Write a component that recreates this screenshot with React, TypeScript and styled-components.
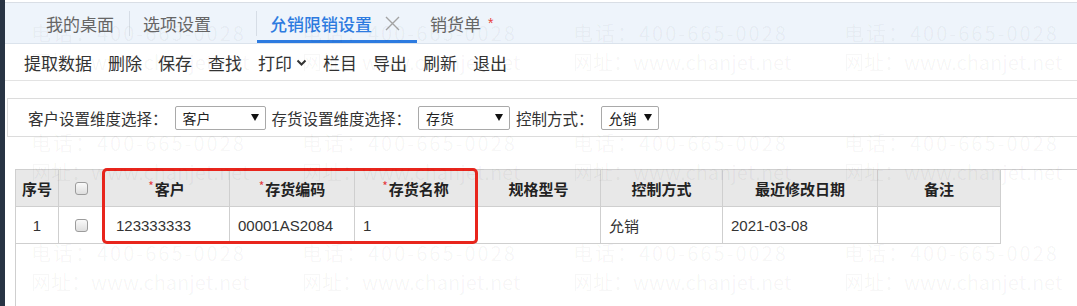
import React from 'react'
import styled, { createGlobalStyle } from 'styled-components'

const GlobalStyle = createGlobalStyle`
  html, body {
    margin: 0;
    padding: 0;
    background: #fff;
  }
  body {
    font-family: 'Liberation Sans', 'Noto Sans CJK SC', sans-serif;
    color: #333;
  }
  * {
    box-sizing: border-box;
  }
`

const Page = styled.div`
  position: relative;
  display: flex;
  width: 1077px;
  height: 306px;
  overflow: hidden;
  background: #fff;
`

const SideStrip = styled.div`
  width: 5px;
  flex-shrink: 0;
  background: #283444;
`

const Main = styled.div`
  flex: 1;
  display: flex;
  flex-direction: column;
  min-width: 0;
`

const TabBar = styled.div`
  margin-top: 2px;
  height: 42px;
  display: flex;
  align-items: stretch;
  padding-left: 28px;
  background: #eef4fb;
  border-top: 1px solid #d9dee5;
  border-bottom: 1px solid #dbe3ec;
`

const Tab = styled.div<{ $active?: boolean }>`
  display: flex;
  align-items: center;
  gap: 13px;
  padding: 0 15px 0 13px;
  font-family: 'Noto Sans CJK SC', sans-serif;
  font-size: 17px;
  font-weight: ${({ $active }) => ($active ? 500 : 400)};
  color: ${({ $active }) => ($active ? '#2d7be0' : '#666')};
  box-shadow: ${({ $active }) => ($active ? 'inset 0 -3px 0 #2d7be0' : 'none')};
`

const TabSep = styled.div`
  align-self: center;
  width: 1px;
  height: 25px;
  background: #d6dde6;
`

const CloseSlot = styled.span<{ $hidden?: boolean }>`
  display: flex;
  width: 17px;
  visibility: ${({ $hidden }) => ($hidden ? 'hidden' : 'visible')};
`

const DirtyMark = styled.span`
  align-self: flex-start;
  margin: 12px 0 0 -8px;
  font-size: 14px;
  color: #e8403a;
`

const Toolbar = styled.div`
  height: 37px;
  display: flex;
  align-items: center;
  gap: 16px;
  padding-left: 19px;
  border-bottom: 1px solid #e3e3e3;
  font-family: 'Noto Sans CJK SC', sans-serif;
  font-size: 17px;
  color: #333;
`

const ToolItem = styled.span`
  display: flex;
  align-items: center;
  gap: 4px;
`

const FilterPanel = styled.div`
  margin: 17px 0 0 2px;
  height: 39px;
  display: flex;
  align-items: center;
  padding-left: 20px;
  border: 1px solid #dcdcdc;
  border-right: none;
`

const FilterLabel = styled.span`
  font-family: 'Noto Sans CJK SC', sans-serif;
  font-size: 15.5px;
  color: #333;
  margin-right: 7px;
`

const SelectBox = styled.div<{ $width: number }>`
  width: ${({ $width }) => $width}px;
  height: 24px;
  display: flex;
  align-items: center;
  justify-content: space-between;
  padding: 0 6px 0 7px;
  margin-right: 6px;
  border: 1px solid #a9a9a9;
  border-radius: 2px;
  background: #fff;
  font-family: 'Noto Sans CJK SC', sans-serif;
  font-size: 14px;
  color: #222;
`

const GridArea = styled.div`
  position: relative;
  flex: 1;
  margin: 32px 0 0 10px;
  border-top: 1px solid #cfcfcf;
  border-left: 1px solid #cfcfcf;
`

const DataGrid = styled.div`
  display: grid;
  grid-template-columns: 43px 45px 126px 125px 122px 124px 122px 155px 123px;
  grid-auto-rows: 37px;
`

const HeadCell = styled.div`
  display: flex;
  align-items: center;
  justify-content: center;
  background: #e8e8e8;
  border-right: 1px solid #cfcfcf;
  border-bottom: 1px solid #cfcfcf;
  font-family: 'Noto Sans CJK SC', sans-serif;
  font-size: 15px;
  font-weight: 700;
  color: #222;
`

const Required = styled.span`
  align-self: flex-start;
  margin: 7px 1px 0 0;
  font-size: 12px;
  font-weight: 400;
  color: #e4393c;
`

const Cell = styled.div<{ $align?: 'left' | 'center'; $pad?: number }>`
  display: flex;
  align-items: center;
  justify-content: ${({ $align }) => ($align === 'center' ? 'center' : 'flex-start')};
  padding-left: ${({ $pad, $align }) => ($align === 'center' ? 0 : $pad ?? 8)}px;
  background: #fff;
  border-right: 1px solid #cfcfcf;
  border-bottom: 1px solid #cfcfcf;
  font-size: 15px;
  color: #333;
`

const CheckBox = styled.span`
  width: 13px;
  height: 13px;
  border: 1px solid #9c9c9c;
  border-radius: 3px;
  background: linear-gradient(#fafafa, #dedede);
`

const Highlight = styled.div`
  position: absolute;
  left: 86px;
  top: -2px;
  width: 376px;
  height: 76px;
  border: 3px solid #e8251c;
  border-radius: 5px;
  pointer-events: none;
`

const Watermark = styled.div`
  position: absolute;
  inset: 0;
  display: grid;
  grid-template-columns: repeat(4, 271px);
  grid-auto-rows: 110px;
  padding: 18px 0 0 31px;
  pointer-events: none;
  font-family: 'Noto Sans CJK SC', sans-serif;
  font-size: 20px;
  line-height: 29px;
  color: rgba(0, 0, 0, 0.045);
  white-space: nowrap;
`

const MarkLine = styled.div<{ $spaced?: boolean }>`
  letter-spacing: ${({ $spaced }) => ($spaced ? '2px' : '0')};
`

const CloseIcon = () => (
  <svg width="15" height="15" viewBox="0 0 15 15">
    <path d="M1 1 L14 14 M14 1 L1 14" stroke="#a3a3a3" strokeWidth="1.4" fill="none" />
  </svg>
)

const Chevron = () => (
  <svg width="11" height="7" viewBox="0 0 11 7">
    <polyline points="1.5,1.5 5.5,5.5 9.5,1.5" stroke="#333" strokeWidth="2" fill="none" />
  </svg>
)

const Caret = () => (
  <svg width="8" height="7" viewBox="0 0 8 7">
    <polygon points="0,0 8,0 4,7" fill="#111" />
  </svg>
)

const tools = ['提取数据', '删除', '保存', '查找', '打印', '栏目', '导出', '刷新', '退出']

const headers = [
  { label: '序号' },
  { label: '', check: true },
  { label: '客户', required: true },
  { label: '存货编码', required: true },
  { label: '存货名称', required: true },
  { label: '规格型号' },
  { label: '控制方式' },
  { label: '最近修改日期' },
  { label: '备注' },
]

const App: React.FC = () => {
  const marks = Array.from({ length: 12 })

  return (
    <Page>
      <GlobalStyle />
      <SideStrip />
      <Main>
        <TabBar>
          <Tab>我的桌面</Tab>
          <TabSep />
          <Tab>
            选项设置
            <CloseSlot $hidden>
              <CloseIcon />
            </CloseSlot>
          </Tab>
          <TabSep />
          <Tab $active>
            允销限销设置
            <CloseSlot>
              <CloseIcon />
            </CloseSlot>
          </Tab>
          <Tab>销货单</Tab>
          <DirtyMark>*</DirtyMark>
        </TabBar>

        <Toolbar>
          {tools.map((t) => (
            <ToolItem key={t}>
              {t}
              {t === '打印' && <Chevron />}
            </ToolItem>
          ))}
        </Toolbar>

        <FilterPanel>
          <FilterLabel>客户设置维度选择：</FilterLabel>
          <SelectBox $width={91}>
            客户
            <Caret />
          </SelectBox>
          <FilterLabel>存货设置维度选择：</FilterLabel>
          <SelectBox $width={92}>
            存货
            <Caret />
          </SelectBox>
          <FilterLabel>控制方式：</FilterLabel>
          <SelectBox $width={58}>
            允销
            <Caret />
          </SelectBox>
        </FilterPanel>

        <GridArea>
          <DataGrid>
            {headers.map((h, i) => (
              <HeadCell key={i}>
                {h.check && <CheckBox />}
                {h.required && <Required>*</Required>}
                {h.label}
              </HeadCell>
            ))}
            <Cell $align="center">1</Cell>
            <Cell $align="center">
              <CheckBox />
            </Cell>
            <Cell $pad={12}>123333333</Cell>
            <Cell>00001AS2084</Cell>
            <Cell>1</Cell>
            <Cell />
            <Cell>允销</Cell>
            <Cell>2021-03-08</Cell>
            <Cell />
          </DataGrid>
          <Highlight />
        </GridArea>
      </Main>

      <Watermark>
        {marks.map((_, i) => (
          <div key={i}>
            <MarkLine $spaced>电话：400-665-0028</MarkLine>
            <MarkLine>网址：www.chanjet.net</MarkLine>
          </div>
        ))}
      </Watermark>
    </Page>
  )
}

export default App
